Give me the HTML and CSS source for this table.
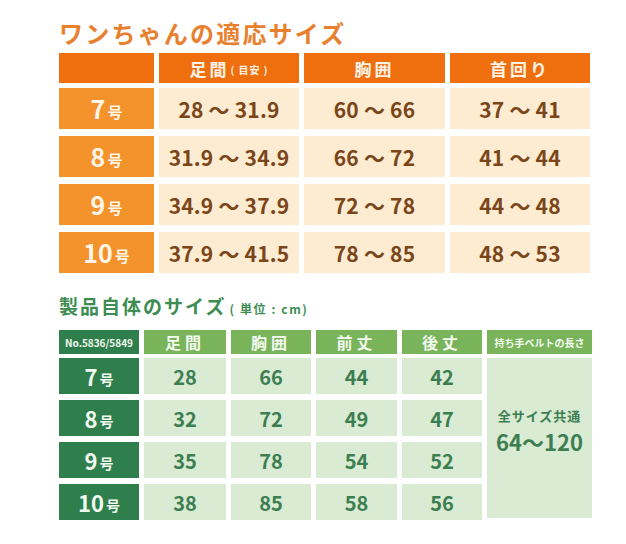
FILE: index.html
```html
<!DOCTYPE html>
<html lang="ja">
<head>
<meta charset="utf-8">
<link rel="stylesheet" href="styles.css">
</head>
<body>
<div class="page">
  <h1 class="title-dog">ワンちゃんの適応サイズ</h1>
  <div class="dog-table">
    <div class="dh"></div>
    <div class="dh">足間<small>( 目安 )</small></div>
    <div class="dh">胸囲</div>
    <div class="dh">首回り</div>

    <div class="dl">7<span>号</span></div>
    <div class="dc">28 ～ 31.9</div>
    <div class="dc">60 ～ 66</div>
    <div class="dc">37 ～ 41</div>

    <div class="dl">8<span>号</span></div>
    <div class="dc">31.9 ～ 34.9</div>
    <div class="dc">66 ～ 72</div>
    <div class="dc">41 ～ 44</div>

    <div class="dl">9<span>号</span></div>
    <div class="dc">34.9 ～ 37.9</div>
    <div class="dc">72 ～ 78</div>
    <div class="dc">44 ～ 48</div>

    <div class="dl">10<span>号</span></div>
    <div class="dc">37.9 ～ 41.5</div>
    <div class="dc">78 ～ 85</div>
    <div class="dc">48 ～ 53</div>
  </div>

  <h2 class="title-prod">製品自体のサイズ<small>( 単位 : cm)</small></h2>
  <div class="prod-table">
    <div class="ph ph-no">No.5836/5849</div>
    <div class="ph">足間</div>
    <div class="ph">胸囲</div>
    <div class="ph">前丈</div>
    <div class="ph">後丈</div>
    <div class="ph ph-belt">持ち手ベルトの長さ</div>

    <div class="pl">7<span>号</span></div>
    <div class="pc">28</div>
    <div class="pc">66</div>
    <div class="pc">44</div>
    <div class="pc">42</div>
    <div class="belt">
      <div class="belt-label">全サイズ共通</div>
      <div class="belt-value">64～120</div>
    </div>

    <div class="pl">8<span>号</span></div>
    <div class="pc">32</div>
    <div class="pc">72</div>
    <div class="pc">49</div>
    <div class="pc">47</div>

    <div class="pl">9<span>号</span></div>
    <div class="pc">35</div>
    <div class="pc">78</div>
    <div class="pc">54</div>
    <div class="pc">52</div>

    <div class="pl">10<span>号</span></div>
    <div class="pc">38</div>
    <div class="pc">85</div>
    <div class="pc">58</div>
    <div class="pc">56</div>
  </div>
</div>
</body>
</html>
```

FILE: styles.css
```css
* { box-sizing: border-box; }
html, body {
  margin: 0;
  padding: 0;
  background: #ffffff;
}
body {
  font-family: "Noto Sans CJK JP", "Noto Sans", sans-serif;
  font-weight: 700;
}
.page {
  padding: 18px 0 0 59px;
  width: 626px;
}
.title-dog {
  margin: 0 0 5px;
  font-size: 24px;
  line-height: 30px;
  letter-spacing: 2.2px;
  color: #e8812f;
  font-weight: 700;
}
.dog-table {
  display: grid;
  grid-template-columns: 95px 140px 141px 140px;
  grid-template-rows: 28px 41px 41px 41px 41px;
  column-gap: 5px;
  row-gap: 7px;
  width: 531px;
}
.dh {
  background: #ef6f0e;
  color: #fff3e6;
  font-size: 17px;
  letter-spacing: 3px;
  display: flex;
  align-items: center;
  justify-content: center;
  margin-bottom: -2px;
}
.dh small {
  font-size: 10px;
  letter-spacing: 1px;
  margin-left: 1px;
  margin-top: 3px;
}
.dl {
  background: #f4922c;
  color: #fff6ea;
  font-size: 25px;
  display: flex;
  align-items: center;
  justify-content: center;
  line-height: 1;
}
.dl span {
  font-size: 15px;
  margin-left: 2px;
  margin-top: 5px;
}
.dc {
  background: #fdebd2;
  color: #7a4518;
  font-size: 21px;
  display: flex;
  align-items: center;
  justify-content: center;
  letter-spacing: 0.2px;
}
.title-prod {
  margin: 20px 0 8px;
  font-size: 19px;
  line-height: 26px;
  letter-spacing: 2px;
  color: #3d8c52;
  font-weight: 700;
}
.title-prod small {
  font-size: 12px;
  letter-spacing: 1.6px;
  margin-left: 3px;
  color: #3d8c52;
}
.prod-table {
  display: grid;
  grid-template-columns: 80px 82px 80px 81px 80px 105px;
  grid-template-rows: 22px 36px 36px 36px 36px;
  column-gap: 5px;
  row-gap: 6px;
  width: 533px;
}
.ph {
  background: #79b45a;
  color: #f3faef;
  font-size: 16px;
  letter-spacing: 4px;
  display: flex;
  align-items: center;
  justify-content: center;
  margin-bottom: -2px;
}
.ph-no {
  background: #2f7f4c;
  font-size: 10px;
  letter-spacing: 0;
}
.ph-belt {
  font-size: 10px;
  letter-spacing: 0;
}
.pl {
  background: #2f7f4c;
  color: #f2faf2;
  font-size: 22px;
  display: flex;
  align-items: center;
  justify-content: center;
  line-height: 1;
}
.pl span {
  font-size: 14px;
  margin-left: 2px;
  margin-top: 5px;
}
.pc {
  background: #d9ebd2;
  color: #3c7e51;
  font-size: 20px;
  display: flex;
  align-items: center;
  justify-content: center;
}
.belt {
  grid-column: 6;
  grid-row: 2 / span 4;
  background: #d9ebd2;
  color: #3c7e51;
  display: flex;
  flex-direction: column;
  align-items: center;
  padding-top: 48px;
  margin-bottom: 2px;
}
.belt-label {
  font-size: 13px;
  letter-spacing: 1px;
  line-height: 20px;
}
.belt-value {
  font-size: 22px;
  line-height: 30px;
}
```
